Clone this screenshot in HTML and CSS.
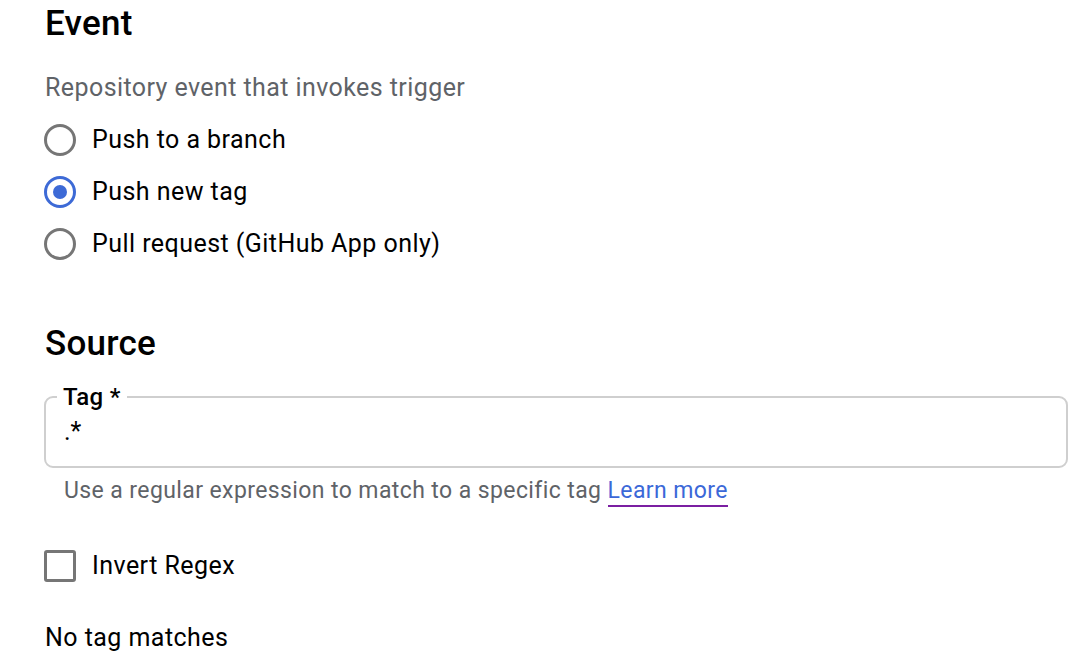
FILE: index.html
```html
<!DOCTYPE html>
<html lang="en">
<head>
<meta charset="utf-8">
<title>Trigger event</title>
<link rel="stylesheet" href="styles.css">
</head>
<body>
<main class="page">
  <section class="section event">
    <h2 class="heading">Event</h2>
    <p class="desc">Repository event that invokes trigger</p>
    <div class="radios">
      <label class="radio-row"><span class="radio"></span><span class="label">Push to a branch</span></label>
      <label class="radio-row"><span class="radio checked"><span class="dot"></span></span><span class="label">Push new tag</span></label>
      <label class="radio-row"><span class="radio"></span><span class="label">Pull request (GitHub App only)</span></label>
    </div>
  </section>
  <section class="section source">
    <h2 class="heading">Source</h2>
    <fieldset class="field">
      <legend class="field-label">Tag *</legend>
      <div class="field-value">.*</div>
    </fieldset>
    <p class="helper">Use a regular expression to match to a specific tag <a class="link" href="#">Learn more</a></p>
    <label class="check-row"><span class="checkbox"></span><span class="label">Invert Regex</span></label>
    <p class="matches">No tag matches</p>
  </section>
</main>
</body>
</html>
```
FILE: styles.css
```css
* { box-sizing: border-box; }
html, body { margin: 0; padding: 0; background: #fff; }
body {
  font-family: Roboto, "Liberation Sans", Arial, sans-serif;
  color: #202124;
  width: 1088px;
  height: 672px;
  overflow: hidden;
}
.page {
  padding: 4px 20px 0 44px;
}
.heading {
  margin: 0;
  font-size: 35px;
  line-height: 40px;
  font-weight: 500;
  letter-spacing: 0.25px;
  color: #000;
  padding-left: 1px;
}
.desc {
  margin: 28px 0 0 1px;
  font-size: 25px;
  line-height: 32px;
  letter-spacing: 0.42px;
  color: #5f6368;
}
.radios {
  display: flex;
  flex-direction: column;
  gap: 20px;
  margin-top: 20px;
}
.radio-row, .check-row {
  display: flex;
  align-items: center;
  height: 32px;
  gap: 16px;
}
.label {
  font-size: 25px;
  line-height: 32px;
  letter-spacing: 0.45px;
  color: #000;
}
.radio {
  width: 32px;
  height: 32px;
  border: 3px solid #767676;
  border-radius: 50%;
  display: flex;
  align-items: center;
  justify-content: center;
  flex: none;
}
.radio.checked { border-color: #3d6ad6; }
.dot {
  width: 14px;
  height: 14px;
  border-radius: 50%;
  background: #3d6ad6;
}
.source { margin-top: 64px; }
.field {
  margin: 19px 0 0;
  padding: 0 18px;
  border: 2px solid #cfcfcf;
  border-radius: 9px;
  height: 85px;
  min-width: 0;
}
.field-label {
  margin-left: -7px;
  padding: 0 6px;
  font-size: 24px;
  line-height: 28px;
  font-weight: 500;
  letter-spacing: 0.3px;
  color: #000;
}
.field-value {
  font-size: 25px;
  line-height: 32px;
  color: #000;
  margin-top: 5px;
}
.helper {
  margin: 8px 0 0 20px;
  font-size: 23px;
  line-height: 30px;
  letter-spacing: 0.4px;
  color: #5f6368;
}
.link {
  color: #3b68d8;
  text-decoration: none;
  border-bottom: 2px solid #7b1fa2;
  padding-bottom: 1px;
}
.check-row { margin-top: 44px; }
.checkbox {
  width: 32px;
  height: 32px;
  border: 3px solid #767676;
  border-radius: 3px;
  flex: none;
}
.matches {
  margin: 40px 0 0 1px;
  font-size: 25px;
  line-height: 32px;
  letter-spacing: 0.45px;
  color: #000;
}
```
